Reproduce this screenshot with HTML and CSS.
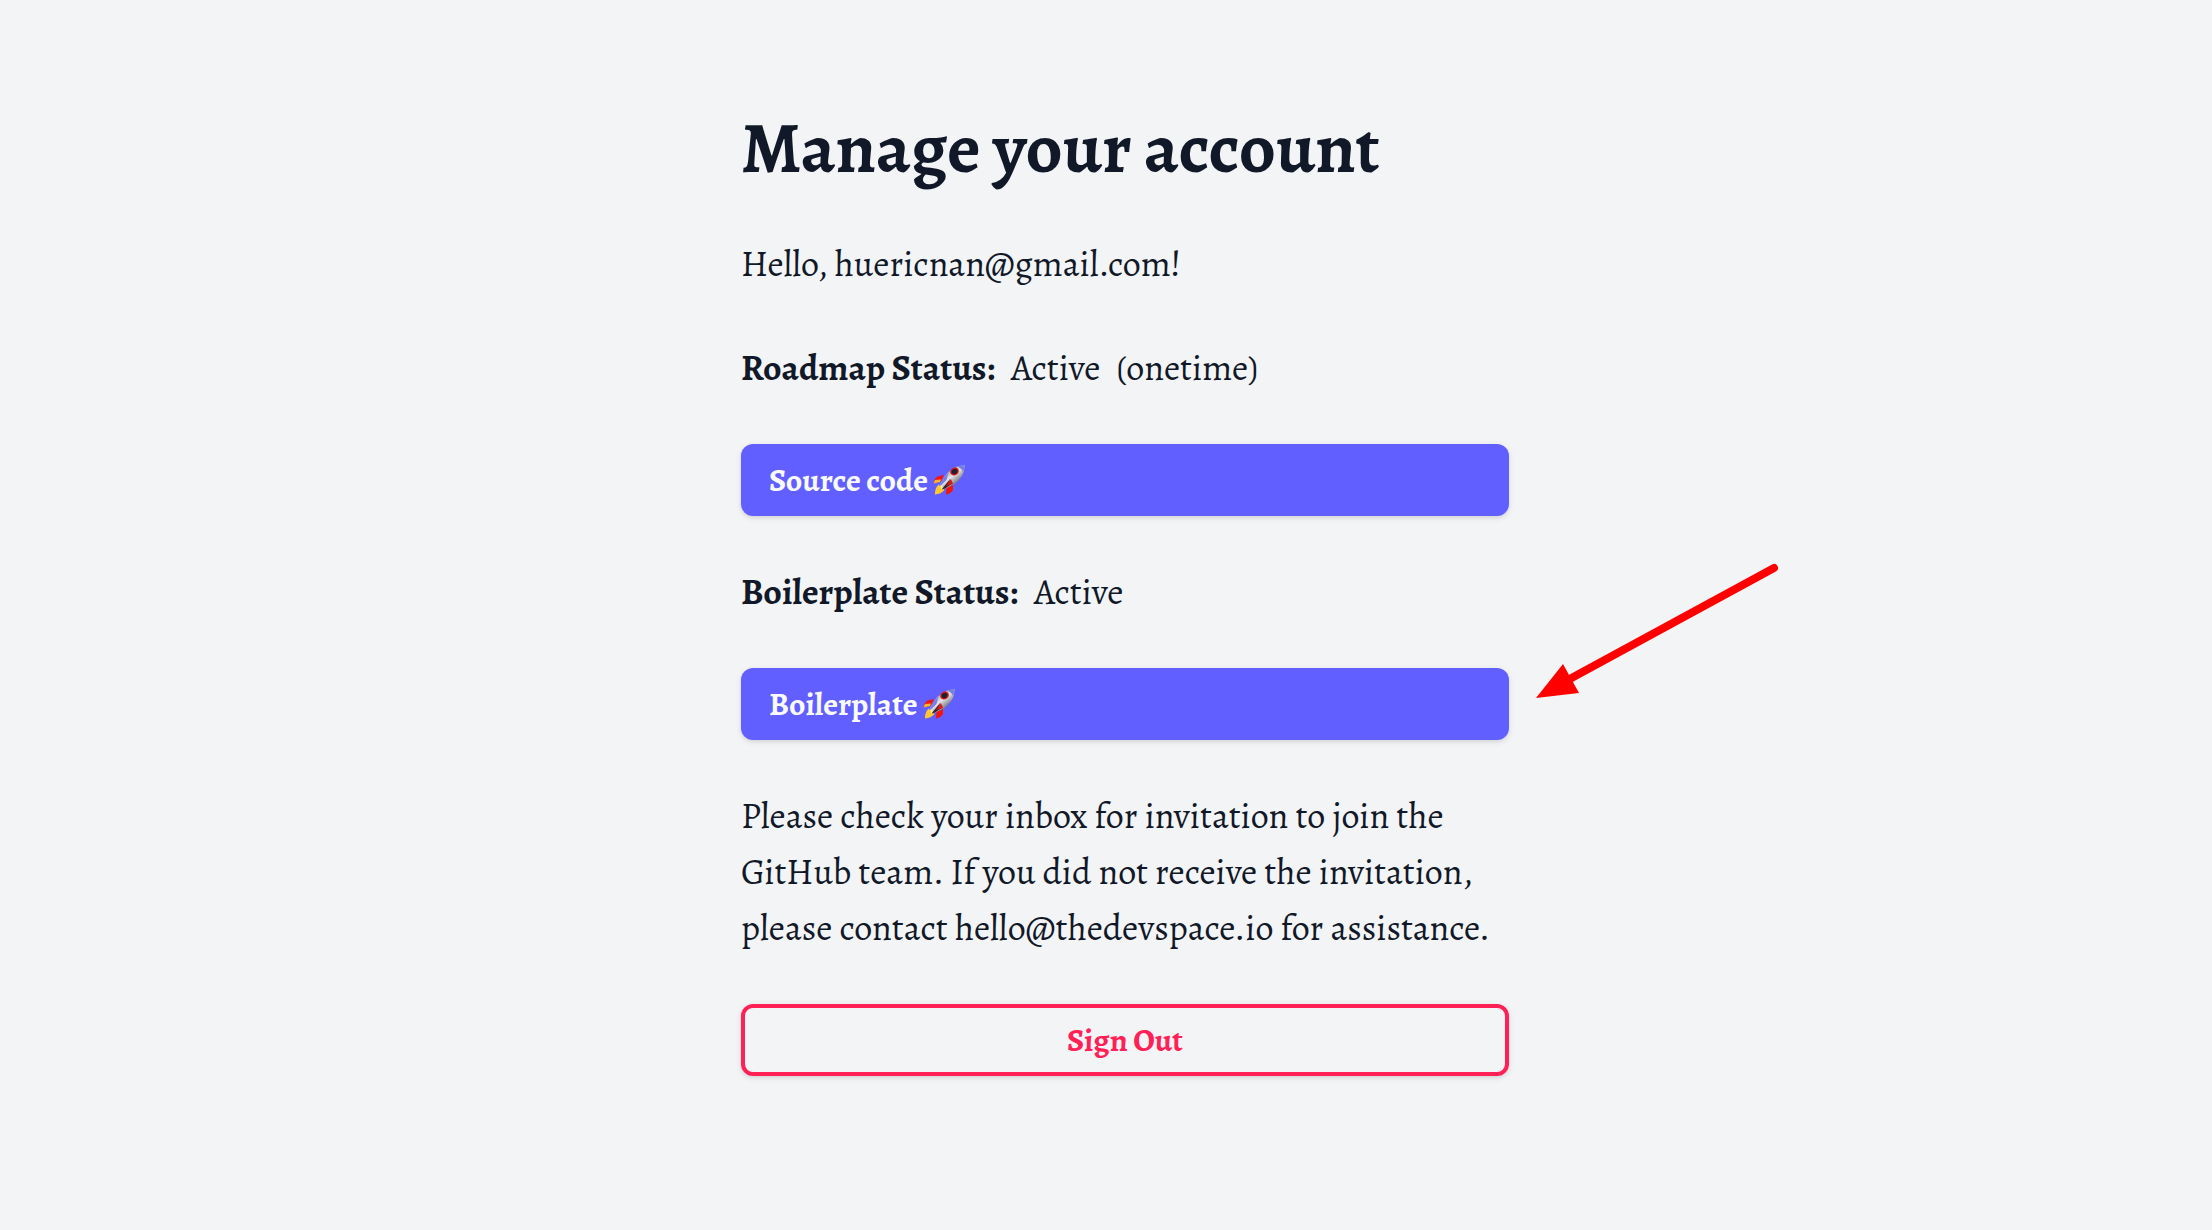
FILE: index.html
```html
<!DOCTYPE html>
<html lang="en">
<head>
    <meta charset="UTF-8">
    <meta name="viewport" content="width=device-width, initial-scale=1.0">
    <title>Manage your account</title>
    <link rel="stylesheet" href="styles.css">
</head>
<body>
    <!-- Shared rocket icon -->
    <svg class="sprite" aria-hidden="true">
        <defs>
            <linearGradient id="hull" x1="0.25" y1="0.2" x2="0.75" y2="0.8">
                <stop offset="0" stop-color="#8e8f9c"/>
                <stop offset="0.45" stop-color="#e6e6ea"/>
                <stop offset="1" stop-color="#5d5d66"/>
            </linearGradient>
        </defs>
        <symbol id="rocket" viewBox="0 0 32 32">
            <path d="M11 11 L4.500 12.500 Q1 15 0.500 19.500 L8 17.500 Z" fill="#f5140a"/>
            <path d="M0.500 19.500 L2 16 L8 15.500 L7 18 Z" fill="#ffb52e"/>
            <path d="M20 20 L20 26 Q17 30 13 30.500 L13.500 24 Z" fill="#f5140a"/>
            <path d="M5.500 20.500 Q1.500 25 2 30.500 Q8 30 11.500 26 Z" fill="#ffc62e"/>
            <path d="M7 22 L8.500 20.500 L11 23.500 L8.500 26 Z" fill="#ffe9a0"/>
            <path d="M7 20.500 L10.500 14 Q17 3 31.500 1 Q32 13 20 21 L11.500 25 Z" fill="url(#hull)"/>
            <path d="M24.500 2.800 Q28 1.200 31.500 1 Q31.600 5 30 8.500 Q29 4.500 24.500 2.800 Z" fill="#7780dd"/>
            <path d="M10.500 14 L15.500 8.500 L13.500 16 L8 21.500 L7 20.500 Z" fill="#777ee6"/>
            <path d="M17.500 14.500 L8.500 25.500 L12 24.500 L20 19 L15 20.500 Z" fill="#34242d"/>
            <path d="M18 15 L13 22 L20 20 Z" fill="#dc170f"/>
            <ellipse cx="21.500" cy="7.500" rx="4.500" ry="3.800" transform="rotate(-30 21.500 7.500)" fill="#d9180f"/>
            <ellipse cx="21.500" cy="7.500" rx="3" ry="2.500" transform="rotate(-30 21.500 7.500)" fill="#202033"/>
        </symbol>
    </svg>

    <main class="container">
        <h1>Manage your account</h1>
        <p>Hello, huericnan@gmail.com!</p>

        <p class="status"><strong>Roadmap Status:</strong> <span>Active</span> <span>(onetime)</span></p>
        <a href="#" class="btn btn-primary">
            Source code
            <svg class="rocket" aria-hidden="true"><use href="#rocket"/></svg>
        </a>

        <p class="status"><strong>Boilerplate Status:</strong> <span>Active</span></p>
        <div class="highlight">
            <a href="#" class="btn btn-primary">
                Boilerplate
                <svg class="rocket" aria-hidden="true"><use href="#rocket"/></svg>
            </a>
            <svg class="arrow" viewBox="0 0 244 140" aria-hidden="true">
                <path d="M30 121 L238 8" fill="none" stroke="#ff0000" stroke-width="8" stroke-linecap="round"/>
                <path d="M0 138 L27 104 L43 133 Z" fill="#ff0000"/>
            </svg>
        </div>

        <p>Please check your inbox for invitation to join the GitHub team. If you did not receive the invitation, please contact hello@thedevspace.io for assistance.</p>

        <button type="button" class="btn btn-outline">Sign Out</button>
    </main>
</body>
</html>
```

FILE: styles.css
```css
:root {
    --background: #f3f4f6;
    --text: #111828;
    --primary: #615fff;
    --danger: #ff2056;
}

* {
    margin: 0;
    padding: 0;
    box-sizing: border-box;
}

body {
    font-family: Alegreya, "Liberation Serif", serif;
    font-size: 36px;
    line-height: 56px;
    background-color: var(--background);
    color: var(--text);
    padding: 108px 0 108px 38px;
    min-height: 100vh;
}

.sprite {
    position: absolute;
    width: 0;
    height: 0;
}

.container {
    display: flex;
    flex-direction: column;
    gap: 48px;
    max-width: 768px;
    margin: 0 auto;
}

h1 {
    font-size: 72px;
    line-height: 80px;
    font-weight: bold;
}

.status {
    display: flex;
    flex-wrap: wrap;
    gap: 0 16px;
}

.btn {
    display: flex;
    align-items: center;
    gap: 5px;
    width: 100%;
    padding: 8px 28px;
    border-radius: 12px;
    font-family: inherit;
    font-size: 32px;
    line-height: 56px;
    font-weight: bold;
    text-decoration: none;
    cursor: pointer;
    box-shadow: 0 2px 6px rgba(0, 0, 0, 0.1), 0 2px 4px -2px rgba(0, 0, 0, 0.1);
}

.btn-primary {
    background: var(--primary);
    color: #f9fafb;
}

.btn-outline {
    justify-content: center;
    padding: 4px 28px;
    background: var(--background);
    border: 4px solid var(--danger);
    color: var(--danger);
}

.rocket {
    width: 32px;
    height: 32px;
}

.highlight {
    position: relative;
}

/* Arrow pointing at the button from the right */
.arrow {
    position: absolute;
    left: calc(100% + 27px);
    bottom: 40px;
    width: 244px;
    height: 140px;
}
```
